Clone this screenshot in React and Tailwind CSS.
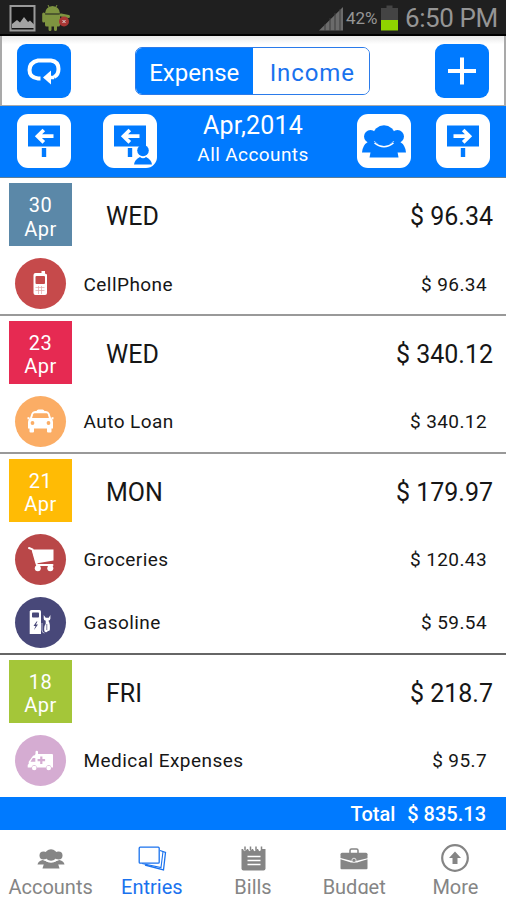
import React, { useState } from 'react';
import clsx from 'clsx';

const DAYS = [
  {
    day: '30', month: 'Apr', weekday: 'WED', total: '$ 96.34', tile: 'bg-[#5b88a8]', box: 'h-[138px] pt-[5px] border-[#999999]',
    items: [{ name: 'CellPhone', amount: '$ 96.34', color: 'bg-[#c64a4b]', icon: PhoneIcon }],
  },
  {
    day: '23', month: 'Apr', weekday: 'WED', total: '$ 340.12', tile: 'bg-[#e62a52]', box: 'h-[138px] pt-[4.5px] border-[#999999]',
    items: [{ name: 'Auto Loan', amount: '$ 340.12', color: 'bg-[#fbad65]', icon: TaxiIcon }],
  },
  {
    day: '21', month: 'Apr', weekday: 'MON', total: '$ 179.97', tile: 'bg-[#ffbb05]', box: 'h-[201px] pt-[4.5px] border-[#666666]',
    items: [
      { name: 'Groceries', amount: '$ 120.43', color: 'bg-[#b94748]', icon: CartIcon },
      { name: 'Gasoline', amount: '$ 59.54', color: 'bg-[#484879]', icon: GasIcon },
    ],
  },
  {
    day: '18', month: 'Apr', weekday: 'FRI', total: '$ 218.7', tile: 'bg-[#a4c639]', box: 'h-[142px] pt-[4.5px] border-white',
    items: [{ name: 'Medical Expenses', amount: '$ 95.7', color: 'bg-[#d5acd2]', icon: AmbulanceIcon }],
  },
];

const TABS = [
  { name: 'Accounts', icon: GroupTabIcon },
  { name: 'Entries', icon: StackIcon },
  { name: 'Bills', icon: NotepadIcon },
  { name: 'Budget', icon: BriefcaseIcon },
  { name: 'More', icon: UpIcon },
];

function PhoneIcon() {
  return (
    <svg width="50" height="50" viewBox="0 0 50 50">
      <path d="M26.500 13h3.500v2.500l2 1v18.500q0 2-2 2h-9.500q-2 0-2-2v-18q0-2 2-2h6z" fill="#fff" />
      <rect x="20.500" y="18" width="9.500" height="8" rx="1" fill="#c64a4b" />
      <path d="M20.500 29.500h9M20.500 32.500h9M23.500 28v8M26.500 28v8" stroke="#e3a5a5" strokeWidth=".7" />
    </svg>
  );
}

function TaxiIcon() {
  return (
    <svg width="50" height="50" viewBox="0 0 50 50">
      <path d="M21.500 15q.4-1.500 2-1.500h4q1.500 0 2 1.500h1.500q2.500 0 3.500 2.500l1.500 4.500q2 1.500 2 4v6.500h-1.500v3q0 1-1 1h-2.500q-1 0-1-1v-3H19v3q0 1-1 1h-2.500q-1 0-1-1v-3H13V26q0-2.500 2-4l1.500-4.500q1-2.500 3.500-2.500z" fill="#fff" />
      <path d="M19.500 17.300h12q1 0 1.300 1l1.100 3.700H17.100l1.100-3.700q.3-1 1.300-1z" fill="#fbad65" />
      <circle cx="17.500" cy="27" r="1.900" fill="#fbad65" />
      <circle cx="33.500" cy="27" r="1.900" fill="#fbad65" />
      <path d="M12.500 22.500l2-.5M38.500 22.500l-2-.5" stroke="#fff" strokeWidth="2" />
    </svg>
  );
}

function CartIcon() {
  return (
    <svg width="50" height="50" viewBox="0 0 50 50">
      <path d="M14 14l3.500 1.400 3.500 12.600 1 3h15.500" stroke="#fff" strokeWidth="2" fill="none" strokeLinecap="round" />
      <path d="M17 15.500h21.500v11l-17.500 3z" fill="#fff" />
      <circle cx="22.800" cy="34.300" r="3" fill="#fff" />
      <circle cx="35.300" cy="34.300" r="3" fill="#fff" />
    </svg>
  );
}

function GasIcon() {
  return (
    <svg width="50" height="50" viewBox="0 0 50 50">
      <path d="M16.500 13h8q1.500 0 1.500 1.500V37H14.700V14.500q0-1.500 1.800-1.500z" fill="#fff" />
      <rect x="17" y="15.500" width="7" height="5" rx=".8" fill="#484879" />
      <path d="M21.500 24.500l-3 4.500h2l-1.500 4 4-5.500h-2.200l1.700-3z" fill="#484879" />
      <path d="M28.700 18v3.500q0 2 2 2.300v3q-1.500 2-1.500 4.500v2q.2 2 1.700 2t2-1.500q2 .5 2-1.500v-4q-.3-3-1.500-4.500 2-.3 2-2.300V18l-1.700 2.700h-3z" fill="#fff" />
      <path d="M27 26v7q0 3 2.500 3" stroke="#c8c8dd" strokeWidth=".9" fill="none" />
      <path d="M31.800 27v6" stroke="#484879" strokeWidth=".7" />
    </svg>
  );
}

function AmbulanceIcon() {
  return (
    <svg width="50" height="50" viewBox="0 0 50 50">
      <path d="M20.500 19v-2q0-1.200 1.300-1.200T23 17v2h14q1 0 1 1v12.500h-1.500q-.5-2.500-2.800-2.500T31 32.500h-9q-.5-2.500-2.800-2.500t-2.800 2.500H12.700v-2.300q0-1 1-1.200v-2.200l4-5.500q.8-1 2-1z" fill="#fff" />
      <path d="M17.800 23h2.500v3.700h-4.800z" fill="#d5acd2" />
      <path d="M26.300 21.500v7.500M22.600 25.200h7.500" stroke="#d5acd2" strokeWidth="2.200" />
      <circle cx="19.200" cy="33" r="2.300" fill="#fff" />
      <circle cx="33.700" cy="33" r="2.300" fill="#fff" />
    </svg>
  );
}

function GroupTabIcon() {
  return (
    <svg width="30" height="30" viewBox="0 0 30 30">
      <g fill="#858585">
        <circle cx="7.500" cy="12.500" r="4" />
        <circle cx="22.500" cy="12.500" r="4" />
        <ellipse cx="15" cy="12" rx="6.200" ry="5.800" />
        <path d="M1.500 21.500q.5-3.500 5-4.500l3 1q5.500 3 11 0l3-1q4.500 1 5 4.500z" />
        <path d="M6.500 25.500l1.500-5h14l1.500 5z" />
      </g>
      <path d="M8.500 17q6.500 4 13 0" stroke="#fff" strokeWidth="1" fill="none" />
    </svg>
  );
}

function StackIcon() {
  return (
    <svg width="30" height="30" viewBox="0 0 30 30" fill="none" stroke="#1a72ee">
      <path d="M23 7.500l5.500 2-2 17.500L8 22" strokeWidth="1.300" />
      <path d="M5 20.500l19 4 2-16" strokeWidth="1.100" />
      <rect x="2.200" y="4.200" width="20" height="16" rx="1" strokeWidth="1.300" fill="#fff" />
    </svg>
  );
}

function NotepadIcon() {
  return (
    <svg width="30" height="30" viewBox="0 0 30 30">
      <path d="M3.500 6h24v19.500q0 2-2 2h-20q-2 0-2-2z" fill="#858585" />
      <path d="M5.500 3.500l2 4M10.500 3.500l2 4M15.500 3.500l2 4M20.500 3.500l2 4" stroke="#fff" strokeWidth="3" />
      <path d="M7 3.500v4M12.500 3.500v4M18 3.500v4M23.500 3.500v4" stroke="#858585" strokeWidth="1.500" />
      <path d="M9.500 13.500h13M9.500 17.500h13M9.500 21.500h13" stroke="#fff" strokeWidth="1.700" />
    </svg>
  );
}

function BriefcaseIcon() {
  return (
    <svg width="30" height="30" viewBox="0 0 30 30">
      <path d="M11 10V7.500q0-1.500 1.500-1.500h5q1.500 0 1.500 1.500V10" stroke="#858585" strokeWidth="1.500" fill="none" />
      <path d="M3 9.700h24q1.500 0 1.500 1.500v4L17 18h-4l-11.500-3v-3.800q0-1.500 1.500-1.500z" fill="#858585" />
      <path d="M1.500 16.300L12 19.500h6l10.500-3.200v8.900q0 1-1 1h-25q-1 0-1-1z" fill="#858585" />
      <circle cx="15" cy="17.300" r="2.100" fill="#858585" stroke="#e5e5e5" strokeWidth="1" />
    </svg>
  );
}

function UpIcon() {
  return (
    <svg width="30" height="30" viewBox="0 0 30 30">
      <circle cx="15" cy="15" r="12.800" stroke="#858585" strokeWidth="2.200" fill="none" />
      <path d="M15 8.500l6 6.500h-3.500v6h-5v-6H9z" fill="#858585" />
    </svg>
  );
}

function SignIcon({ right, person }) {
  return (
    <svg width="54" height="54" viewBox="0 0 54 54">
      <rect x="11" y="11.500" width="32" height="21" fill="#007aff" />
      <rect x="24.800" y="34" width="4.400" height="9" fill="#007aff" />
      <g transform={right ? 'matrix(-1 0 0 1 54 0)' : undefined}>
        <path d="M20.500 22.200H36.500M26.800 16l-6.300 6.200 6.300 6.200" stroke="#fff" strokeWidth="3.700" fill="none" />
      </g>
      {person && (
        <>
          <circle cx="40" cy="36.500" r="5.800" fill="#007aff" />
          <path d="M31 50.500q.5-5 6-7.500 3 2.500 6 0 5.500 2.500 6 7.500z" fill="#007aff" />
        </>
      )}
    </svg>
  );
}

function GroupIcon() {
  return (
    <svg width="54" height="54" viewBox="0 0 54 54" fill="#007aff">
      <circle cx="13.500" cy="22.500" r="6.500" />
      <circle cx="40.500" cy="22.500" r="6.500" />
      <path d="M5 38.500q.5-7.500 6.500-11l6 .5q9.500 6 19 0l6-.5q6 3.500 6.500 11z" />
      <path d="M12.500 43.500l1.500-8h26l1.500 8z" />
      <ellipse cx="27" cy="21.500" rx="10.800" ry="10.200" />
      <path d="M17.500 29q9.500 7.500 19 0" stroke="#fff" strokeWidth="1.500" fill="none" />
    </svg>
  );
}

function StatusBar() {
  return (
    <div className="flex h-9 items-start border-b-2 border-black bg-[#1f1f1f] text-[#959595]">
      <svg width="80" height="34" viewBox="0 0 80 34">
        <rect x="10.500" y="6" width="24" height="24.500" fill="#141414" stroke="#9a9a9a" strokeWidth="2" />
        <path d="M12 28v-4l5-4 3 2.500 4-5.500 4 5 2-1.500 4 4v3.500z" fill="#a3a3a3" />
        <g fill="#7e9440">
          <path d="M45 13.500q.5-7 7.500-7.500 7 .5 7.500 7.500z" />
          <path d="M45 14.500h15V25q0 1.500-1.500 1.500h-12Q45 26.500 45 25z" />
        </g>
        <path d="M48 5l1.500 3M57 5l-1.500 3" stroke="#7e9440" />
        <path d="M43.700 14v7M61 15l7.500 1.500M50 26v3.500M55.500 26v3.500" stroke="#7e9440" strokeWidth="3" strokeLinecap="round" />
        <circle cx="64" cy="21.500" r="5" fill="#a83634" />
        <path d="M62.500 20l3 3M65.500 20l-3 3" stroke="#ddd" />
      </svg>
      <svg className="ml-[238px]" width="27" height="34" viewBox="0 0 27 34">
        <path d="M1 30.500L25 7v23.500z" fill="#6b6b6b" />
        <path d="M7 24v7M12 18v13M17 13v18M22 9v22" stroke="#3d3d3d" strokeWidth="1" />
      </svg>
      <span className="ml-[1px] mt-[6px] w-[33px] text-[17px] leading-6 tracking-[-0.1px]">42%</span>
      <svg className="ml-[2px]" width="18" height="34" viewBox="0 0 18 34">
        <path d="M5.500 5.500h6V8H17v13H0V8h5.500z" fill="#444" />
        <rect y="20" width="17" height="10.500" fill="#8fd400" />
      </svg>
      <span className="ml-[6px] mt-[1px] text-[26px] leading-[35px] tracking-[-0.4px] whitespace-nowrap">6:50 PM</span>
    </div>
  );
}

function Square({ children }) {
  return (
    <button className="h-[54px] w-[54px] shrink-0 rounded-[11px] bg-white">{children}</button>
  );
}

function DaySection({ data }) {
  return (
    <section className={clsx('border-b-2', data.box)}>
      <div className="flex h-[69px] items-start pl-[9px] pr-[13px]">
        <div className={clsx('h-[63px] w-[63px] pt-[11px] text-center text-[20px] leading-[23.5px] tracking-[0.5px] text-white', data.tile)}>
          <div>{data.day}</div>
          <div>{data.month}</div>
        </div>
        <div className="flex flex-1 justify-between pl-[34px] text-[25px] leading-[67px]">
          <span>{data.weekday}</span>
          <span>{data.total}</span>
        </div>
      </div>
      {data.items.map((item) => (
        <div key={item.name} className="flex h-[63px] items-center pl-[15px] pr-[19px] text-[19px]">
          <div className={clsx('h-[51px] w-[51px] rounded-full', item.color)}>
            <item.icon />
          </div>
          <span className="ml-[17.5px] flex-1 pt-[3px] tracking-[0.45px]">{item.name}</span>
          <span className="pt-[3px] tracking-[0.4px]">{item.amount}</span>
        </div>
      ))}
    </section>
  );
}

export default function App() {
  const [mode, setMode] = useState('Expense');
  const [tab, setTab] = useState('Entries');

  return (
    <div className="flex h-[900px] w-[506px] flex-col overflow-hidden bg-white font-['Roboto',sans-serif] text-[#161616]">
      <StatusBar />

      {/* Toolbar */}
      <header className="flex h-[70px] items-start border-x-2 border-b border-[#a9a9a9] bg-gradient-to-b from-[#e9e9e9] via-white via-[12%] to-white px-[15px] pt-2">
        <button className="h-[54px] w-[54px] rounded-[9px] bg-[#007aff]">
          <svg width="54" height="54" viewBox="0 0 54 54">
            <path d="M23.500 34.500H21Q12.500 33.500 12.500 26T21 16.500H34Q41.500 17.500 41.500 25 41.500 31 37 33" stroke="#fff" strokeWidth="4" fill="none" />
            <path d="M34 26.500V40.500l-8-7z" fill="#fff" />
            <path d="M32 33.500h5" stroke="#fff" strokeWidth="3.500" />
          </svg>
        </button>
        <div className="ml-16 mt-[3px] flex h-[48px] w-[236px] overflow-hidden rounded-[7px] border border-[#2b7bea] text-[24px]">
          {['Expense', 'Income'].map((name) => (
            <button
              key={name}
              onClick={() => setMode(name)}
              className={clsx('w-1/2 pt-[3px]', mode === name ? 'bg-[#007aff] text-white' : 'bg-white pl-[3px] tracking-[0.9px] text-[#1a72ee]')}
            >
              {name}
            </button>
          ))}
        </div>
        <button className="ml-[65px] h-[54px] w-[54px] shrink-0 rounded-[9px] bg-[#007aff]">
          <svg width="54" height="54" viewBox="0 0 54 54">
            <path d="M13 27h28M27 13.500v27" stroke="#fff" strokeWidth="4" />
          </svg>
        </button>
      </header>

      {/* Month switcher */}
      <div className="flex h-[72px] items-start border-b border-[#5d7f9a] bg-[#007aff] pl-[17px] pr-[16px] pt-2 text-white">
        <Square><SignIcon /></Square>
        <div className="w-8" />
        <Square><SignIcon person /></Square>
        <div className="flex-1 pr-[8px] pt-[2px] text-center">
          <div className="text-[25px] leading-[20px] tracking-[0.2px]">Apr,2014</div>
          <div className="mt-[7px] text-[19px] leading-[24px] tracking-[0.4px]">All Accounts</div>
        </div>
        <Square><GroupIcon /></Square>
        <div className="w-[25px]" />
        <Square><SignIcon right /></Square>
      </div>

      <main>
        {DAYS.map((data) => (
          <DaySection key={data.day} data={data} />
        ))}
      </main>

      <div className="flex h-[33px] shrink-0 items-center justify-end gap-[12px] bg-[#007aff] pr-[20px] pt-[1px] text-[20px] font-medium text-white">
        <span>Total</span>
        <span>$ 835.13</span>
      </div>

      <nav className="flex h-[70px] shrink-0">
        {TABS.map(({ name, icon: Icon }) => (
          <button
            key={name}
            onClick={() => setTab(name)}
            className={clsx('flex flex-1 flex-col items-center pt-[13px]', tab === name ? 'text-[#1a72ee]' : 'text-[#858585]')}
          >
            <Icon />
            <span className={clsx('mt-[2px] h-[19px] text-[20px] leading-[25px]', name === 'Budget' && 'overflow-hidden')}>{name}</span>
          </button>
        ))}
      </nav>
    </div>
  );
}
